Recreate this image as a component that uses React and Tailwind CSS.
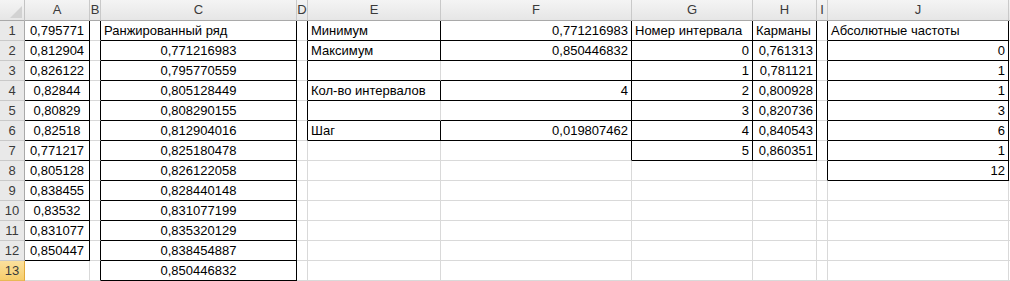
import React from "react";

// =========================
// SHEET SETUP
// =========================

const COLS = ["A", "B", "C", "D", "E", "F", "G", "H", "I", "J", "K"];

const A_VALUES = [
  "0,795771", "0,812904", "0,826122", "0,82844", "0,80829", "0,82518",
  "0,771217", "0,805128", "0,838455", "0,83532", "0,831077", "0,850447",
];

const C_VALUES = [
  "0,771216983", "0,795770559", "0,805128449", "0,808290155",
  "0,812904016", "0,825180478", "0,826122058", "0,828440148",
  "0,831077199", "0,835320129", "0,838454887", "0,850446832",
];

const BINS = ["0,761313", "0,781121", "0,800928", "0,820736", "0,840543", "0,860351"];
const FREQ = ["0", "1", "1", "3", "6", "1", "12"];

// cell contents: [text, align]
function cellAt(r, c) {
  if (c === "A" && r <= 12) return [A_VALUES[r - 1], "c"];
  if (c === "C") return r === 1 ? ["Ранжированный ряд", "l"] : [C_VALUES[r - 2], "c"];
  if (c === "E") {
    if (r === 1) return ["Минимум", "l"];
    if (r === 2) return ["Максимум", "l"];
    if (r === 4) return ["Кол-во интервалов", "l"];
    if (r === 6) return ["Шаг", "l"];
  }
  if (c === "F") {
    if (r === 1) return ["0,771216983", "r"];
    if (r === 2) return ["0,850446832", "r"];
    if (r === 4) return ["4", "r"];
    if (r === 6) return ["0,019807462", "r"];
  }
  if (c === "G") {
    if (r === 1) return ["Номер интервала", "l"];
    if (r <= 7) return [String(r - 2), "r"];
  }
  if (c === "H") {
    if (r === 1) return ["Карманы", "l"];
    if (r <= 7) return [BINS[r - 2], "r"];
  }
  if (c === "J") {
    if (r === 1) return ["Абсолютные частоты", "l"];
    if (r <= 8) return [FREQ[r - 2], "r"];
  }
  return ["", "l"];
}

// ranges with "all borders"
function bordered(r, c) {
  if (c === "A") return r >= 1 && r <= 12;
  if (c === "C") return r >= 1 && r <= 13;
  if (c === "E" || c === "F") return r >= 1 && r <= 6;
  if (c === "G" || c === "H") return r >= 1 && r <= 7;
  if (c === "J") return r >= 1 && r <= 8;
  return false;
}

function nextCol(c) {
  return COLS[COLS.indexOf(c) + 1];
}

function rightBlack(r, c) {
  // empty rows 3 and 5 in E:F have no inner line
  if (c === "E" && (r === 3 || r === 5)) return false;
  return bordered(r, c) || bordered(r, nextCol(c));
}

function bottomBlack(r, c) {
  return bordered(r, c) || bordered(r + 1, c);
}

const ALIGN = {
  l: "justify-start pl-[3px]",
  c: "justify-center",
  r: "justify-end pr-[3px]",
};

function App() {
  const rows = Array.from({ length: 13 }, (_, i) => i + 1);

  return (
    <div
      className="w-[1010px] h-[281px] overflow-hidden bg-white text-[13px] text-black"
      style={{ fontFamily: '"Liberation Sans", Arial, sans-serif' }}
    >
      <div className="grid grid-cols-[25px_65px_11px_196px_11px_133px_191px_121px_64px_11px_181px_1fr] grid-rows-[21px_repeat(13,20px)]">

        {/* =========================
            COLUMN HEADERS
        ========================= */}

        <div className="relative bg-gradient-to-b from-[#f4f4f4] to-[#e6e6e6] border-r border-b border-r-[#c3c3c3] border-b-[#a9a9a9]">
          <svg className="absolute left-[10px] top-[6px]" width="13" height="13" viewBox="0 0 13 13">
            <polygon points="12,0 12,12 0,12" fill="#d2d2d2" />
          </svg>
        </div>

        {COLS.map((c) => (
          <div
            key={c}
            className="flex items-center justify-center bg-gradient-to-b from-[#f4f4f4] to-[#e6e6e6] border-r border-b border-r-[#c9c9c9] border-b-[#a9a9a9] text-[#3a3a3a] leading-[20px]"
          >
            {c === "K" ? "" : c}
          </div>
        ))}

        {/* =========================
            ROWS
        ========================= */}

        {rows.map((r) => (
          <React.Fragment key={r}>
            <div
              className={
                r === 13
                  ? "flex items-center justify-center bg-gradient-to-b from-[#fbe09c] to-[#f6cd6b] border-r border-b border-r-[#e2a93a] border-b-[#e8b955] text-[#3a3a3a]"
                  : "flex items-center justify-center bg-[#e9e9e9] border-r border-b border-r-[#a9a9a9] border-b-[#c9c9c9] text-[#3a3a3a]"
              }
            >
              {r}
            </div>

            {COLS.map((c) => {
              const [text, align] = cellAt(r, c);
              return (
                <div
                  key={c}
                  className={[
                    "flex items-end pb-[1px] whitespace-nowrap leading-[17px] border-r border-b",
                    ALIGN[align],
                    rightBlack(r, c) ? "border-r-black" : "border-r-[#d9d9d9]",
                    bottomBlack(r, c) ? "border-b-black" : "border-b-[#d9d9d9]",
                  ].join(" ")}
                >
                  {text}
                </div>
              );
            })}
          </React.Fragment>
        ))}

      </div>
    </div>
  );
}

export default App;
